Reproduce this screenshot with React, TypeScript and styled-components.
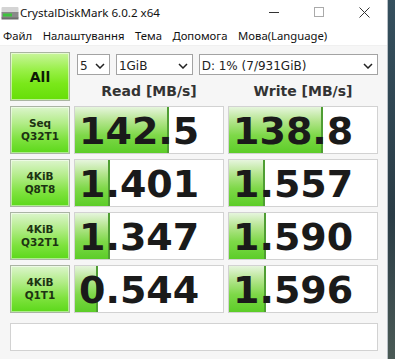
import React from 'react';
import styled, { createGlobalStyle } from 'styled-components';

const Global = createGlobalStyle`
  html, body { margin: 0; padding: 0; width: 395px; height: 359px; overflow: hidden; }
  #root { width: 395px; height: 359px; }
`;

const Screen = styled.div`
  display: flex;
  width: 395px;
  height: 359px;
  background: linear-gradient(180deg, #35505e 0%, #2a3c46 60%, #4a5a55 100%);
`;

const Window = styled.div`
  width: 388px;
  height: 359px;
  box-sizing: border-box;
  border-right: 1px solid #b9c0c6;
  background: #f6f6f6;
  display: flex;
  flex-direction: column;
  font-family: "Noto Sans", "Open Sans", sans-serif;
`;

const TitleBar = styled.div`
  height: 25px;
  display: flex;
  align-items: center;
  background: #fff;
  color: #111;
  font-size: 11.6px;
`;

const AppIcon = styled.svg`
  width: 18px;
  height: 16px;
  margin: 0 1px 0 1px;
  flex: none;
`;

const Title = styled.span`
  flex: 1;
`;

const Controls = styled.div`
  display: flex;
  height: 25px;
`;

const Ctl = styled.div`
  width: 45px;
  height: 25px;
  display: flex;
  align-items: center;
  justify-content: center;
`;

const MenuBar = styled.div`
  height: 20px;
  display: flex;
  align-items: center;
  background: #fff;
  font-size: 11.3px;
  color: #111;
  border-bottom: 1px solid #f0f0f0;
`;

const MenuItem = styled.span`
  padding: 0 5.5px 0 3px;
  margin-right: 2px;
`;

const Body = styled.div`
  flex: 1;
  padding: 6px 0 0 10px;
  display: flex;
  flex-direction: column;
`;

const Grid = styled.div`
  display: grid;
  grid-template-columns: 60px 150px 150px;
  grid-template-rows: 49px repeat(4, 48px);
  column-gap: 4px;
  row-gap: 5px;
`;

const AllButton = styled.div`
  box-sizing: border-box;
  border: 1px solid #a9b5a0;
  background: linear-gradient(180deg, #c9f59c 0%, #9af04a 35%, #7ae81a 65%, #66de08 100%);
  box-shadow: inset 0 0 0 1px rgba(255, 255, 255, 0.55);
  display: flex;
  align-items: center;
  justify-content: center;
  font-family: "DejaVu Sans", sans-serif;
  font-weight: bold;
  font-size: 14px;
  color: #0d1a05;
`;

const TopRight = styled.div`
  grid-column: 2 / 4;
  display: flex;
  flex-direction: column;
`;

const SelectRow = styled.div`
  display: flex;
  gap: 6px;
  margin: 2px 0 0 3px;
  height: 21px;
`;

const Select = styled.div<{ $w: number }>`
  width: ${(p) => p.$w}px;
  height: 21px;
  box-sizing: border-box;
  border: 1px solid #a3a3a3;
  background: #fff;
  display: flex;
  align-items: center;
  justify-content: space-between;
  padding: 2px 4px 0 2px;
  font-family: "DejaVu Sans", sans-serif;
  font-size: 12px;
  color: #222;
`;

const Chevron = styled.svg`
  width: 10px;
  height: 6px;
  flex: none;
`;

const Headers = styled.div`
  flex: 1;
  display: grid;
  grid-template-columns: 150px 150px;
  column-gap: 4px;
  align-items: center;
  padding-top: 6px;
`;

const Header = styled.div`
  text-align: center;
  font-family: "DejaVu Sans", sans-serif;
  font-weight: bold;
  font-size: 14px;
  color: #333;
`;

const Label = styled.div`
  box-sizing: border-box;
  border: 1px solid #aab4a4;
  background: linear-gradient(180deg, #dcf5cc 0%, #b2ec88 35%, #7ee23e 70%, #5cd81a 100%);
  box-shadow: inset 0 0 0 1px rgba(255, 255, 255, 0.5);
  display: flex;
  flex-direction: column;
  align-items: center;
  justify-content: center;
  font-family: "DejaVu Sans", sans-serif;
  font-weight: bold;
  font-size: 10.5px;
  line-height: 13px;
  color: #1c3312;
`;

const ValueBox = styled.div`
  position: relative;
  box-sizing: border-box;
  border: 1px solid #d2d2d2;
  background: #fff;
  display: flex;
  align-items: center;
  overflow: hidden;
`;

const Bar = styled.div`
  position: absolute;
  left: 0;
  top: 0;
  bottom: 0;
  background: linear-gradient(180deg, #e6f5dd 0%, #b4e58e 30%, #7ed848 62%, #5ccd28 100%);
  border-right: 2px solid #4f9e33;
`;

const Value = styled.span`
  position: relative;
  padding-left: 4px;
  font-family: "DejaVu Sans", sans-serif;
  font-weight: bold;
  font-size: 38px;
  line-height: 38px;
  color: #1a1a1a;
  margin-top: 2px;
`;

const Status = styled.div`
  width: 368px;
  height: 28px;
  margin-top: 10px;
  box-sizing: border-box;
  border: 1px solid #d2d2d2;
  background: #fff;
`;

const rows = [
  { l1: 'Seq', l2: 'Q32T1', r: '142.5', w: '138.8' },
  { l1: '4KiB', l2: 'Q8T8', r: '1.401', w: '1.557' },
  { l1: '4KiB', l2: 'Q32T1', r: '1.347', w: '1.590' },
  { l1: '4KiB', l2: 'Q1T1', r: '0.544', w: '1.596' },
];

const barWidth = (v: string) => {
  const n = parseFloat(v);
  return Math.max(0, Math.min(148, 28.7 + 29.4 * Math.log10(n)));
};

const ChevronIcon = () => (
  <Chevron viewBox="0 0 10 6">
    <path d="M1 1 L5 5 L9 1" fill="none" stroke="#222" strokeWidth="1.5" />
  </Chevron>
);

export default function App() {
  return (
    <>
      <Global />
      <Screen>
        <Window>
          <TitleBar>
            <AppIcon viewBox="0 0 18 16">
              <rect x="0.5" y="2" width="17" height="6" rx="1" fill="#d4d4d4" />
              <rect x="0.5" y="7" width="17" height="6" fill="#8a8a8a" />
              <rect x="2" y="8.5" width="9" height="3" fill="#3cc43c" />
              <rect x="0.5" y="12.5" width="17" height="2" fill="#6c6c6c" />
            </AppIcon>
            <Title>CrystalDiskMark 6.0.2 x64</Title>
            <Controls>
              <Ctl>
                <svg width="11" height="11" viewBox="0 0 11 11">
                  <path d="M0 5.5 H10" stroke="#333" strokeWidth="1" />
                </svg>
              </Ctl>
              <Ctl>
                <svg width="11" height="11" viewBox="0 0 11 11">
                  <rect x="0.5" y="0.5" width="9" height="9" fill="none" stroke="#aaa" strokeWidth="1" />
                </svg>
              </Ctl>
              <Ctl>
                <svg width="11" height="11" viewBox="0 0 11 11">
                  <path d="M0.5 0.5 L10.5 10.5 M10.5 0.5 L0.5 10.5" stroke="#333" strokeWidth="1" />
                </svg>
              </Ctl>
            </Controls>
          </TitleBar>
          <MenuBar>
            <MenuItem>Файл</MenuItem>
            <MenuItem>Налаштування</MenuItem>
            <MenuItem>Тема</MenuItem>
            <MenuItem>Допомога</MenuItem>
            <MenuItem>Мова(Language)</MenuItem>
          </MenuBar>
          <Body>
            <Grid>
              <AllButton>All</AllButton>
              <TopRight>
                <SelectRow>
                  <Select $w={33}>
                    <span>5</span>
                    <ChevronIcon />
                  </Select>
                  <Select $w={77}>
                    <span>1GiB</span>
                    <ChevronIcon />
                  </Select>
                  <Select $w={180}>
                    <span>D: 1% (7/931GiB)</span>
                    <ChevronIcon />
                  </Select>
                </SelectRow>
                <Headers>
                  <Header>Read [MB/s]</Header>
                  <Header>Write [MB/s]</Header>
                </Headers>
              </TopRight>
              {rows.map((r, i) => (
                <React.Fragment key={i}>
                  <Label>
                    <span>{r.l1}</span>
                    <span>{r.l2}</span>
                  </Label>
                  <ValueBox>
                    <Bar style={{ width: barWidth(r.r) }} />
                    <Value>{r.r}</Value>
                  </ValueBox>
                  <ValueBox>
                    <Bar style={{ width: barWidth(r.w) }} />
                    <Value>{r.w}</Value>
                  </ValueBox>
                </React.Fragment>
              ))}
            </Grid>
            <Status />
          </Body>
        </Window>
      </Screen>
    </>
  );
}
